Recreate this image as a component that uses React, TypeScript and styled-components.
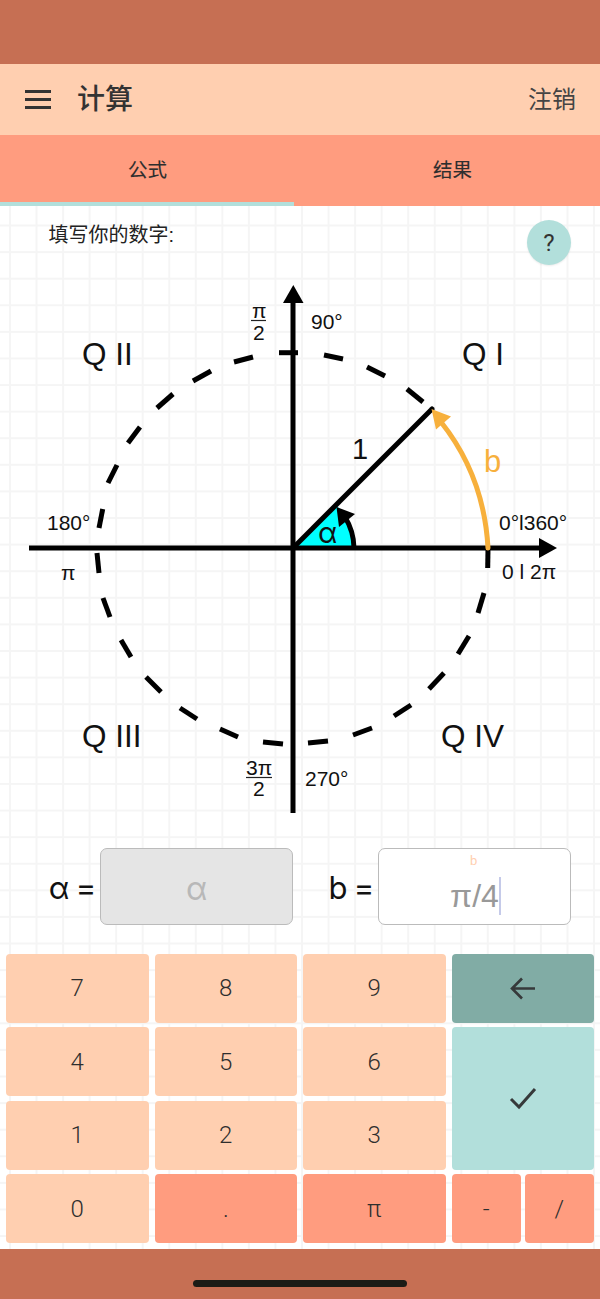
import React from "react";
import styled, { createGlobalStyle } from "styled-components";

const Global = createGlobalStyle`
  html, body { margin: 0; padding: 0; background: #fff; }
  body { font-family: "Roboto", "Noto Sans CJK SC", sans-serif; }
  * { box-sizing: border-box; }
`;

const Page = styled.div`
  width: 600px;
  height: 1299px;
  display: flex;
  flex-direction: column;
  overflow: hidden;
`;
const StatusBar = styled.div`
  height: 64px;
  flex: none;
  background: #c66f53;
`;
const Header = styled.header`
  height: 71px;
  flex: none;
  background: #ffcfb0;
  display: flex;
  align-items: center;
  padding: 0 24px 0 25px;
  color: #333;
`;
const MenuIcon = styled.svg`
  width: 26px;
  height: 19px;
  flex: none;
`;
const Title = styled.h1`
  margin: 0 0 0 26px;
  font: 500 28px/1 "Roboto", "Noto Sans CJK SC", sans-serif;
  flex: 1;
`;
const Logout = styled.span`
  font: 400 24px/1 "Roboto", "Noto Sans CJK SC", sans-serif;
  color: #444;
`;
const Tabs = styled.nav`
  height: 71px;
  flex: none;
  background: #ff9c7f;
  display: flex;
  position: relative;
`;
const Tab = styled.div`
  flex: 1;
  display: flex;
  align-items: center;
  justify-content: center;
  font: 400 19.5px/1 "Roboto", "Noto Sans CJK SC", sans-serif;
  color: #2e2e2e;
  -webkit-text-stroke: 0.12px #2e2e2e;
  &:first-child { padding-right: 5px; }
  &:nth-child(2) { padding-left: 5px; }
`;
const Indicator = styled.div`
  position: absolute;
  left: 0;
  bottom: 0;
  width: 294px;
  height: 4px;
  background: #b2dfdb;
`;
const Content = styled.main`
  flex: 1;
  display: flex;
  flex-direction: column;
  background-color: #fff;
  background-image:
    linear-gradient(to right, #f5f5f5 1.5px, transparent 1.5px),
    linear-gradient(to bottom, #f5f5f5 1.5px, transparent 1.5px);
  background-size: 26.55px 26.6px;
  background-position: 9px 18.5px;
`;
const PromptRow = styled.div`
  height: 69px;
  flex: none;
  display: flex;
  align-items: flex-start;
  justify-content: space-between;
  padding: 14px 29px 0 48.5px;
`;
const Prompt = styled.span`
  font: 400 20px/28px "Liberation Sans", "Noto Sans CJK SC", sans-serif;
  color: #222;
  margin-top: 1px;
`;
const HelpButton = styled.div`
  width: 44px;
  height: 45px;
  border-radius: 50%;
  background: #b2dfdb;
  color: #333;
  font: 400 24px/1 "Roboto", sans-serif;
  display: flex;
  align-items: center;
  justify-content: center;
  box-shadow: 0 1px 2px rgba(0, 0, 0, 0.08);
`;
const Diagram = styled.svg`
  display: block;
  flex: none;
  width: 600px;
  height: 550px;
`;
const Label = styled.text<{ $size: number; $color?: string; $alpha?: boolean }>`
  font-family: ${(p) => (p.$alpha ? '"Inter"' : '"Liberation Sans"')}, sans-serif;
  font-size: ${(p) => p.$size}px;
  fill: ${(p) => p.$color || "#111"};
`;
const Inputs = styled.div`
  flex: none;
  height: 77px;
  margin-top: 22.5px;
  display: grid;
  grid-template-columns: 193px 193px;
  column-gap: 85px;
  padding-left: 100px;
`;
const InputBox = styled.div<{ $disabled?: boolean }>`
  position: relative;
  border: 1px solid #bbb;
  border-radius: 7px;
  background: ${(p) => (p.$disabled ? "#e5e5e5" : "#fff")};
  display: flex;
  align-items: center;
  justify-content: center;
`;
const EqLabel = styled.span`
  position: absolute;
  right: 100%;
  margin-right: 6px;
  top: 22px;
  font: 400 31px/34px "Inter", "Liberation Sans", sans-serif;
  letter-spacing: -1.2px;
  color: #111;
  white-space: nowrap;
`;
const Placeholder = styled.span`
  font: 400 32px/1 "Inter", sans-serif;
  color: #b8b8b8;
  position: relative;
  top: 3px;
  left: 0;
`;
const Value = styled.span`
  font: 400 32px/38px "Liberation Sans", sans-serif;
  color: #999;
  border-right: 2px solid #c5cae9;
  position: relative;
  top: 10px;
  left: 1px;
`;
const FloatLabel = styled.span`
  position: absolute;
  top: 5px;
  left: 91px;
  font: 400 13px/14px "Roboto", sans-serif;
  color: #ffcfb0;
`;
const Keypad = styled.div`
  flex: none;
  margin-top: 29px;
  padding: 0 6px;
  display: grid;
  grid-template-columns: repeat(4, 142.5px);
  grid-auto-rows: 69px;
  column-gap: 6px;
  row-gap: 4.5px;
`;
const Key = styled.div<{ $bg?: string; $rows?: number }>`
  background: ${(p) => p.$bg || "#ffcfb0"};
  grid-row: span ${(p) => p.$rows || 1};
  border-radius: 4px;
  display: flex;
  align-items: center;
  justify-content: center;
  font: 300 24px/1 "Roboto", sans-serif;
  color: #2e2e2e;
`;
const SplitKeys = styled.div`
  display: grid;
  grid-template-columns: 1fr 1fr;
  gap: 4px;
`;
const KeyIcon = styled.svg`
  width: 28px;
  height: 24px;
  fill: none;
  stroke: #36393a;
  stroke-width: 2.6;
`;
const BottomBar = styled.div`
  height: 50px;
  flex: none;
  background: #c66f53;
  display: flex;
  justify-content: center;
  padding-top: 31px;
`;
const HomeIndicator = styled.div`
  width: 214px;
  height: 7px;
  border-radius: 4px;
  background: #1c1c16;
`;

const dashes: number[][] = [
  [279, 352.7, 298, 352.7], [234, 362, 253, 357], [193, 381, 211, 371], [157, 408, 173, 394],
  [128, 443, 140, 427], [108, 483, 117, 465], [99, 528, 102.7, 509], [97, 553, 99, 573],
  [103, 598, 110, 617], [121, 640, 131, 657], [146, 677, 161, 692], [180, 708, 197, 719],
  [220, 729, 238, 737], [263, 742, 283, 744], [308, 743, 328, 741], [353, 735, 372, 728],
  [394, 716, 411, 705], [429, 689, 444, 673], [458, 654, 469, 636], [478, 613, 484, 593],
  [488, 548, 487.7, 568], [324, 355, 343, 359], [367, 367, 385, 376], [407, 389, 423, 402],
];

const texts: { x: number; y: number; s: number; t: string; c?: string; a?: boolean }[] = [
  { x: 82, y: 365, s: 31.5, t: "Q II" },
  { x: 462, y: 365, s: 31.5, t: "Q I" },
  { x: 82, y: 747, s: 31.5, t: "Q III" },
  { x: 441, y: 747, s: 31.5, t: "Q IV" },
  { x: 311, y: 329, s: 21, t: "90°" },
  { x: 47, y: 530, s: 21, t: "180°" },
  { x: 499, y: 530, s: 21, t: "0°l360°" },
  { x: 502, y: 579, s: 21, t: "0 l 2π" },
  { x: 61, y: 580, s: 21, t: "π" },
  { x: 305, y: 786, s: 21, t: "270°" },
  { x: 252, y: 318, s: 21, t: "π" },
  { x: 253, y: 340, s: 21, t: "2" },
  { x: 246, y: 775, s: 21, t: "3π" },
  { x: 253, y: 796, s: 21, t: "2" },
  { x: 352, y: 459, s: 29, t: "1" },
  { x: 484, y: 472, s: 31, t: "b", c: "#f7b03c" },
  { x: 318, y: 543, s: 29, t: "α", a: true },
];

const keys = ["7", "8", "9"];

export default function App() {
  return (
    <Page>
      <Global />
      <StatusBar />
      <Header>
        <MenuIcon viewBox="0 0 26 19">
          <path d="M0 1.5H26M0 9.5H26M0 17.5H26" stroke="#333" strokeWidth="3" />
        </MenuIcon>
        <Title>计算</Title>
        <Logout>注销</Logout>
      </Header>
      <Tabs>
        <Tab>公式</Tab>
        <Tab>结果</Tab>
        <Indicator />
      </Tabs>
      <Content>
        <PromptRow>
          <Prompt>填写你的数字:</Prompt>
          <HelpButton>?</HelpButton>
        </PromptRow>
        <Diagram viewBox="0 275 600 550">
          <path d="M293 548 L336 505 A61 61 0 0 1 354 548 Z" fill="#00ffff" />
          <path d="M354 548 A61 61 0 0 0 345 517" fill="none" stroke="#000" strokeWidth="5" />
          <polygon points="336.5,507 355,514 339,527" fill="#000" />
          {dashes.map((d, i) => (
            <line key={i} x1={d[0]} y1={d[1]} x2={d[2]} y2={d[3]} stroke="#000" strokeWidth="5" />
          ))}
          <line x1="293" y1="300" x2="293" y2="813" stroke="#000" strokeWidth="5" />
          <line x1="29" y1="548" x2="542" y2="548" stroke="#000" strokeWidth="5" />
          <polygon points="293.3,285 283,303 303.5,303" fill="#000" />
          <polygon points="557,548 539,538 539,558" fill="#000" />
          <line x1="293" y1="548" x2="432" y2="409" stroke="#000" strokeWidth="5" strokeLinecap="round" />
          <path d="M488 548 Q484 476 441 422" fill="none" stroke="#f7b03c" strokeWidth="5" strokeLinecap="round" />
          <polygon points="431.5,409 451,416.5 436,429.5" fill="#f7b03c" />
          <line x1="251" y1="320.5" x2="266" y2="320.5" stroke="#222" strokeWidth="1.2" />
          <line x1="246" y1="777.5" x2="272" y2="777.5" stroke="#222" strokeWidth="1.2" />
          {texts.map((t, i) => (
            <Label key={i} x={t.x} y={t.y} $size={t.s} $color={t.c} $alpha={t.a}>
              {t.t}
            </Label>
          ))}
        </Diagram>
        <Inputs>
          <InputBox $disabled>
            <EqLabel>α =</EqLabel>
            <Placeholder>α</Placeholder>
          </InputBox>
          <InputBox>
            <EqLabel>b =</EqLabel>
            <FloatLabel>b</FloatLabel>
            <Value>π/4</Value>
          </InputBox>
        </Inputs>
        <Keypad>
          {keys.map((k) => (
            <Key key={k}>{k}</Key>
          ))}
          <Key $bg="#81aca5">
            <KeyIcon viewBox="0 0 28 24">
              <path d="M26 12.5H3M13 2.5L3 12.5L13 22.5" />
            </KeyIcon>
          </Key>
          <Key>4</Key>
          <Key>5</Key>
          <Key>6</Key>
          <Key $bg="#b2dfdb" $rows={2}>
            <KeyIcon viewBox="0 0 28 24">
              <path d="M2 13L10 21L26 3" strokeWidth="3" />
            </KeyIcon>
          </Key>
          <Key>1</Key>
          <Key>2</Key>
          <Key>3</Key>
          <Key>0</Key>
          <Key $bg="#ff9c7f">.</Key>
          <Key $bg="#ff9c7f">π</Key>
          <SplitKeys>
            <Key $bg="#ff9c7f">-</Key>
            <Key $bg="#ff9c7f">/</Key>
          </SplitKeys>
        </Keypad>
      </Content>
      <BottomBar>
        <HomeIndicator />
      </BottomBar>
    </Page>
  );
}
